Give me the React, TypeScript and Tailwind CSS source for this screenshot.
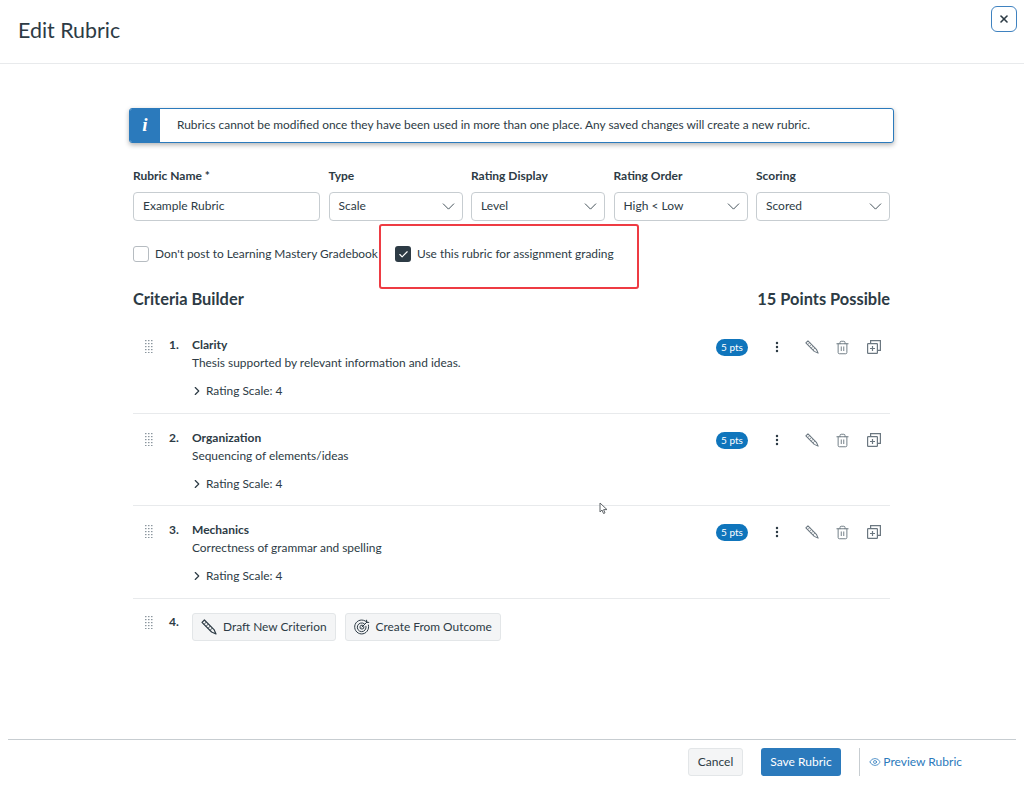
import { ChevronDown, ChevronRight, Eye, Trash2, X, EllipsisVertical, Check } from 'lucide-react';
import type { ReactNode } from 'react';

const CRITERIA = [
  { n: 1, title: 'Clarity', desc: 'Thesis supported by relevant information and ideas.' },
  { n: 2, title: 'Organization', desc: 'Sequencing of elements/ideas' },
  { n: 3, title: 'Mechanics', desc: 'Correctness of grammar and spelling' },
];

function Field({ label, width, children }: { label: string; width: string; children: ReactNode }) {
  return (
    <div className={`${width} shrink-0`}>
      <div className="mb-[8px] h-[17px] text-[12px] leading-[17px] font-bold text-[#2d3b45]">{label}</div>
      {children}
    </div>
  );
}

function SelectBox({ value }: { value: string }) {
  return (
    <div className="flex h-[29px] items-center justify-between rounded-[4px] border border-[#c7cdd1] bg-white pr-[3px] pb-[1px] pl-[9px] text-[12px] text-[#2d3b45]">
      {value}
      <ChevronDown size={21} strokeWidth={1} className="text-[#2d3b45]" />
    </div>
  );
}

function DragHandle() {
  return (
    <svg width="8" height="13" viewBox="0 0 8 13" className="shrink-0 text-[#8b969e]" fill="currentColor">
      {[0, 3, 6, 9, 12].map((y) => (
        <g key={y}>
          <rect x="0" y={y} width="1.5" height="1.2" />
          <rect x="3" y={y} width="1.5" height="1.2" />
          <rect x="6" y={y} width="1.5" height="1.2" />
        </g>
      ))}
    </svg>
  );
}

function PencilIcon({ size = 16 }: { size?: number }) {
  return (
    <svg width={size} height={size} viewBox="0 0 16 16" fill="none" stroke="currentColor" strokeWidth="1.2" strokeLinejoin="round">
      <path d="M1 3.4 3.4 1 13 10.6 15 15 10.6 13Z" />
      <path d="M3 5.4 5.4 3M5 7.4 7.4 5M7 9.4 9.4 7M9 11.4l2.4-2.4" strokeWidth="0.9" />
    </svg>
  );
}

function DuplicateIcon() {
  return (
    <svg width="14" height="14" viewBox="0 0 14 14" fill="none" stroke="currentColor" strokeWidth="1.2">
      <rect x="0.6" y="3.6" width="9.8" height="9.8" rx="0.6" />
      <path d="M3.6 3.4V0.6h9.8v9.8h-2.8" />
      <path d="M5.5 6v5M3 8.5h5" />
    </svg>
  );
}

function OutcomeIcon() {
  return (
    <svg width="16" height="16" viewBox="0 0 16 16" fill="none" stroke="currentColor" strokeWidth="1" strokeLinecap="round">
      <path d="M12.2 2.6A7 7 0 1 0 14.4 6" />
      <path d="M10.2 4.6A4.4 4.4 0 1 0 12 7.2" />
      <path d="M8.6 6.2A2 2 0 1 0 9.9 7.6" />
      <path d="M8 8 13 3M12.6 1.2v2.2h2.2" />
    </svg>
  );
}

function CriterionRow({ n, title, desc }: { n: number; title: string; desc: string }) {
  return (
    <div className="flex h-[92px] border-b border-[#e8eaec] pt-[16px] first:h-[93px] last:h-[93px]">
      <div className="mt-[2px] flex h-[14px] w-[35px] items-center pl-[12px]">
        <DragHandle />
      </div>
      <div className="w-[24px] pl-[1px] text-[12px] leading-[16px] font-bold text-[#2d3b45]">{n}.</div>
      <div className="flex-1 text-[11.9px] text-[#2d3b45]">
        <div className="text-[12px] leading-[16px] font-bold">{title}</div>
        <div className="mt-[1px] leading-[18px]">{desc}</div>
        <div className="mt-[10px] flex items-center gap-[2px] leading-[18px]">
          <ChevronRight size={14} strokeWidth={2} className="-ml-[2px] text-[#2d3b45]" />
          <span>Rating Scale: 4</span>
        </div>
      </div>
      <div className="mt-[1px] flex h-[18px] items-center text-[#6b7780]">
        <span className="flex h-[17px] w-[32px] items-center justify-center rounded-full bg-[#0f75bc] text-[10px] text-white">5 pts</span>
        <EllipsisVertical size={14} strokeWidth={2.2} className="ml-[22px] text-[#2d3b45]" />
        <span className="ml-[21px] flex">
          <PencilIcon size={14} />
        </span>
        <Trash2 size={15} strokeWidth={1.5} className="ml-[16px]" />
        <span className="ml-[17px] flex">
          <DuplicateIcon />
        </span>
        <span className="w-[9px]" />
      </div>
    </div>
  );
}

function GreyButton({ children }: { children: ReactNode }) {
  return (
    <div className="flex h-[28px] items-center gap-[6px] rounded-[3px] border border-[#e3e6e8] bg-[#f4f5f6] px-[8px] text-[11.9px] text-[#2d3b45]">
      {children}
    </div>
  );
}

export default function App() {
  return (
    <div className="relative flex h-[786px] w-[1024px] flex-col overflow-hidden bg-white font-[Lato,sans-serif] text-[#2d3b45]">
      <header className="flex h-[64px] shrink-0 items-start justify-between border-b border-[#e8eaec] pt-[16px] pr-[7px] pl-[18px]">
        <h1 className="text-[21.4px] leading-[28px] font-normal text-[#2d3b45]">Edit Rubric</h1>
        <button type="button" className="-mt-[10px] flex h-[26px] w-[26px] items-center justify-center rounded-[6px] border-[1.5px] border-[#3f82c0] bg-white">
          <X size={12} strokeWidth={3.25} className="text-[#2d3b45]" />
        </button>
      </header>

      <main className="flex-1 pt-[44px] pr-[134px] pl-[133px]">
        <div className="-mx-[4px] flex h-[35px] overflow-hidden rounded-[3px] border border-[#2b7abc] bg-white shadow-[0_2px_5px_rgba(0,0,0,0.3)]">
          <div className="flex w-[30px] items-center justify-center bg-[#2b7abc]">
            <span className="font-['Liberation_Serif',serif] text-[19px] font-bold text-white italic">i</span>
          </div>
          <div className="flex items-center pb-[1px] pl-[17px] text-[11.9px] text-[#2d3b45]">
            Rubrics cannot be modified once they have been used in more than one place. Any saved changes will create a new rubric.
          </div>
        </div>

        <div className="mt-[24px] flex gap-[8.5px]">
          <Field label="Rubric Name *" width="w-[187px]">
            <div className="flex h-[29px] items-center rounded-[4px] border border-[#c7cdd1] bg-white pb-[1px] pl-[9px] text-[12px]">Example Rubric</div>
          </Field>
          <Field label="Type" width="w-[134px]">
            <SelectBox value="Scale" />
          </Field>
          <Field label="Rating Display" width="w-[134px]">
            <SelectBox value="Level" />
          </Field>
          <Field label="Rating Order" width="w-[134px]">
            <SelectBox value="High < Low" />
          </Field>
          <Field label="Scoring" width="w-[134px]">
            <SelectBox value="Scored" />
          </Field>
        </div>

        <div className="mt-[24px] flex h-[18px] items-center text-[11.9px]">
          <span className="h-[16px] w-[16px] rounded-[3px] border border-[#b6bcc1] bg-white" />
          <span className="ml-[6px] w-[240px] whitespace-nowrap">Don't post to Learning Mastery Gradebook</span>
          <span className="flex h-[16px] w-[16px] items-center justify-center rounded-[3px] bg-[#2d3b45]">
            <Check size={11} strokeWidth={2.5} className="text-white" />
          </span>
          <span className="ml-[6px] whitespace-nowrap">Use this rubric for assignment grading</span>
        </div>

        <div className="mt-[25px] flex items-center justify-between text-[16.4px] leading-[22px] font-bold text-[#2d3b45]">
          <h2>Criteria Builder</h2>
          <div>15 Points Possible</div>
        </div>

        <div className="mt-[11px]">
          {CRITERIA.map((c) => (
            <CriterionRow key={c.n} {...c} />
          ))}
        </div>

        <div className="flex pt-[14px]">
          <div className="mt-[2px] flex h-[14px] w-[35px] items-center pl-[12px]">
            <DragHandle />
          </div>
          <div className="w-[24px] pt-[1px] pl-[1px] text-[12px] leading-[16px] font-bold">4.</div>
          <div className="flex gap-[9px]">
            <GreyButton>
              <PencilIcon size={16} />
              Draft New Criterion
            </GreyButton>
            <GreyButton>
              <OutcomeIcon />
              Create From Outcome
            </GreyButton>
          </div>
        </div>
      </main>

      <footer className="mx-[8px] flex h-[47px] shrink-0 items-start justify-end border-t border-[#c7cdd1] pt-[8px] pr-[54px]">
        <button type="button" className="h-[28px] w-[55px] rounded-[3px] border border-[#e3e6e8] bg-[#f4f5f6] text-[12px] text-[#2d3b45]">Cancel</button>
        <button type="button" className="ml-[18px] h-[28px] w-[80px] rounded-[3px] bg-[#2b7abc] text-[12px] text-white">Save Rubric</button>
        <span className="ml-[18px] h-[28px] w-px bg-[#c7cdd1]" />
        <a className="ml-[9px] flex h-[28px] w-[93px] items-center justify-between text-[12px] text-[#2b7abc]">
          <Eye size={12} strokeWidth={1.5} />
          Preview Rubric
        </a>
      </footer>

      {/* annotation over the screenshot */}
      <div className="absolute top-[224px] left-[379px] h-[65px] w-[260px] rounded-[3px] border-2 border-[#ee3b43]" />

      <svg className="absolute top-[502px] left-[599px]" width="9" height="13" viewBox="0 0 9 13" fill="white" stroke="#5f6468" strokeWidth="1">
        <path d="M1 1v9l2-2 1.5 3.5 1.5-.6L4.6 7.6H8Z" />
      </svg>
    </div>
  );
}
